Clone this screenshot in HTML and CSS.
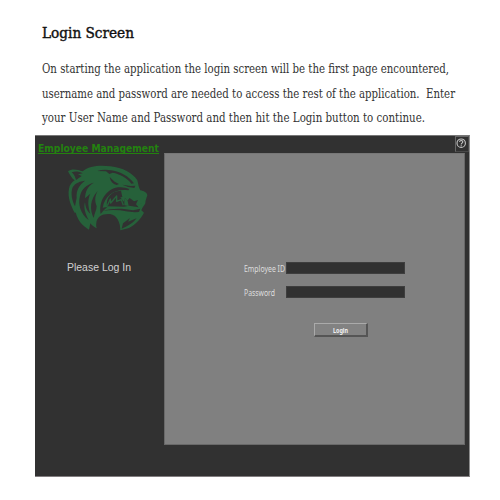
FILE: index.html
```html
<!DOCTYPE html>
<html lang="en">
<head>
<meta charset="utf-8">
<title>Login Screen</title>
<link rel="stylesheet" href="styles.css">
</head>
<body>
<header class="intro">
  <h1><svg class="line" width="420" height="26"><text x="0" y="18" textLength="92" lengthAdjust="spacingAndGlyphs">Login Screen</text></svg></h1>
  <p>
    <svg class="line" width="420" height="24"><text x="0" y="17" textLength="407" lengthAdjust="spacingAndGlyphs">On starting the application the login screen will be the first page encountered,</text></svg>
    <svg class="line" width="420" height="24"><text x="0" y="17.5" textLength="413" lengthAdjust="spacingAndGlyphs">username and password are needed to access the rest of the application.&#160; Enter</text></svg>
    <svg class="line" width="420" height="24"><text x="0" y="18" textLength="383" lengthAdjust="spacingAndGlyphs">your User Name and Password and then hit the Login button to continue.</text></svg>
  </p>
</header>
<main class="window">
  <aside class="side">
    <svg class="brand" width="126" height="20"><text x="0" y="14" textLength="121" lengthAdjust="spacingAndGlyphs">Employee Management</text><path d="M0 15.5H121"/></svg>
    <svg class="logo" width="95" height="75" viewBox="0 0 285 225">
      <path class="fur" d="M24 34C34 25 53 28 68 34C86 18 119 15 151 19C188 23 218 39 232 61C235 73 236 82 241 91C251 93 261 97 262 106C259 116 256 122 256 130C252 139 246 143 244 151L252 158C243 177 225 194 207 204L181 211C181 187 171 165 150 162C128 160 110 170 109 189C108 196 108 201 111 205C103 203 97 197 91 190L87 209C66 197 53 181 47 157L45 160C32 136 22 111 27 86C29 74 36 67 44 61C36 56 30 46 24 34Z"/>
      <g class="cut">
        <path d="M35 37C48 33 57 35 68 40L54 43L65 48L48 60C46 52 43 44 35 37Z"/>
        <path d="M146 30C181 33 207 49 222 70L214 71C201 53 179 42 158 38L148 42L138 34L112 33Q127 28 146 30Z"/>
        <path d="M37 84C42 74 51 65 75 62C57 75 48 92 50 113L45 139C36 121 32 102 37 84Z"/>
        <path d="M101 68C83 79 76 94 75 115L91 101C82 119 84 140 91 161C79 151 76 140 75 126C70 143 76 161 86 180C62 163 53 133 60 108C65 87 79 74 101 68Z"/>
        <path d="M113 93C104 109 104 123 110 139C110 151 103 160 101 174C89 149 89 119 113 93Z"/>
        <path d="M149 51L164 65L177 72L170 75C158 72 151 64 149 51Z"/>
        <path d="M187 74L212 78L226 77L223 84L204 81Z"/>
        <path d="M122 162C116 128 134 89 174 82Q193 80 208 87L205 91C166 85 136 103 128 143L142 141L131 151Z"/>
        <path d="M141 139C137 113 154 93 183 92L187 111L181 112L191 125L195 113L202 122L209 114L222 124L234 120L228 133L236 142L207 137L192 140Z"/>
        <path d="M128 153C157 143 192 145 219 151L241 146L237 156Q209 158 180 151Q153 148 128 153Z"/>
        <path d="M189 190L210 174L204 185L230 175C220 188 202 200 185 206Z"/>
      </g>
      <path class="teeth" d="M142 137L151 117L152 129L170 108L170 124L184 119L190 136"/>
      <path class="fur" d="M193 112L203 123L206 138L193 136ZM233 137L243 130L247 140L239 145Z"/>
    </svg>
    <svg class="prompt" width="70" height="20"><text x="0" y="15" textLength="64" lengthAdjust="spacingAndGlyphs">Please Log In</text></svg>
  </aside>
  <section class="content">
    <div class="bar"><button class="help" type="button" aria-label="Help">
      <svg width="13" height="15" viewBox="0 0 13 15"><circle cx="6.2" cy="7.2" r="4.2"/><path d="M4.6 6C4.7 4 8 4.2 7.8 6C7.7 7.2 6.2 7 6.2 8.5M6.2 9.2V10.2"/></svg>
    </button></div>
    <form class="panel">
      <label class="row"><svg class="label" width="42" height="14"><text x="0" y="11" textLength="41" lengthAdjust="spacingAndGlyphs">Employee ID</text></svg><input type="text"></label>
      <label class="row"><svg class="label" width="42" height="14"><text x="0" y="11" textLength="31" lengthAdjust="spacingAndGlyphs">Password</text></svg><input type="password"></label>
      <button class="login" type="button"><svg width="16" height="12"><text x="0" y="9" textLength="15" lengthAdjust="spacingAndGlyphs">Login</text></svg></button>
    </form>
  </section>
</main>
</body>
</html>
```
FILE: styles.css
```css
* { box-sizing: border-box; }
body { margin: 0; width: 500px; height: 500px; background: #fff; overflow: hidden; }
svg { display: block; overflow: visible; flex: none; }
.intro { height: 135px; padding: 20px 0 0 42px; font-family: "DejaVu Serif Condensed", "DejaVu Serif", serif; font-stretch: condensed; }
h1 { margin: 0; height: 36px; font-size: 15.2px; font-weight: 400; }
h1 text { fill: #111; stroke: #111; stroke-width: .4px; }
p { margin: 0; font-size: 12.4px; }
p text { fill: #333; }
.line { width: 420px; }

.window { display: flex; width: 435px; height: 342px; margin-left: 35px; background: #313131; border-top: 1px solid #777; border-right: 1px solid #8d8d8d; border-bottom: 1px solid #817d7f; }
.side { width: 129px; flex: none; }
.brand { margin: 2px 0 0 3px; font: bold 11px "DejaVu Sans", sans-serif; }
.brand text { fill: #23820f; }
.brand path { stroke: #23820f; stroke-width: 1; }
.logo { margin: 2px 0 0 25px; }
.fur { fill: #26613a; }
.cut { fill: #313131; }
.teeth { fill: none; stroke: #26613a; stroke-width: 4; stroke-linejoin: round; }
.prompt { margin: 21px 0 0 32px; font: 11.5px "Liberation Sans", sans-serif; }
.prompt text { fill: #d0d0d0; }

.content { width: 305px; }
.bar { display: flex; justify-content: flex-end; height: 17px; }
.help { width: 14px; height: 16px; padding: 0; border: 1px solid #484848; border-top-color: #666; border-left-color: #666; background: #303030; }
.help svg { margin: -1px 0 0 -1px; fill: none; stroke: #c5c5c5; stroke-width: 1.1; }
.panel { width: 301px; height: 292px; padding: 108px 0 0 79px; background: #808080; border: 1px solid #696969; border-top-color: #777; }
.row { display: flex; align-items: center; height: 12px; margin-bottom: 12px; }
.row + .row { margin-bottom: 0; }
.label { font: 8px "Noto Sans", sans-serif; }
.label text { fill: #dedede; }
input { width: 119px; height: 12px; margin: 0; padding: 0; border: 0; background: #313131; outline: 1px solid rgb(90 90 90 / 35%); outline-offset: -1px; }
.login { display: flex; align-items: center; justify-content: center; width: 54px; height: 14px; margin: 25px 0 0 70px; padding: 0; background: #828282; border: 1px solid #aaa; border-right: 2px solid #555; border-bottom: 2px solid #555; font: bold 6.5px "Noto Sans", sans-serif; }
.login text { fill: #f2f2f2; }
```
